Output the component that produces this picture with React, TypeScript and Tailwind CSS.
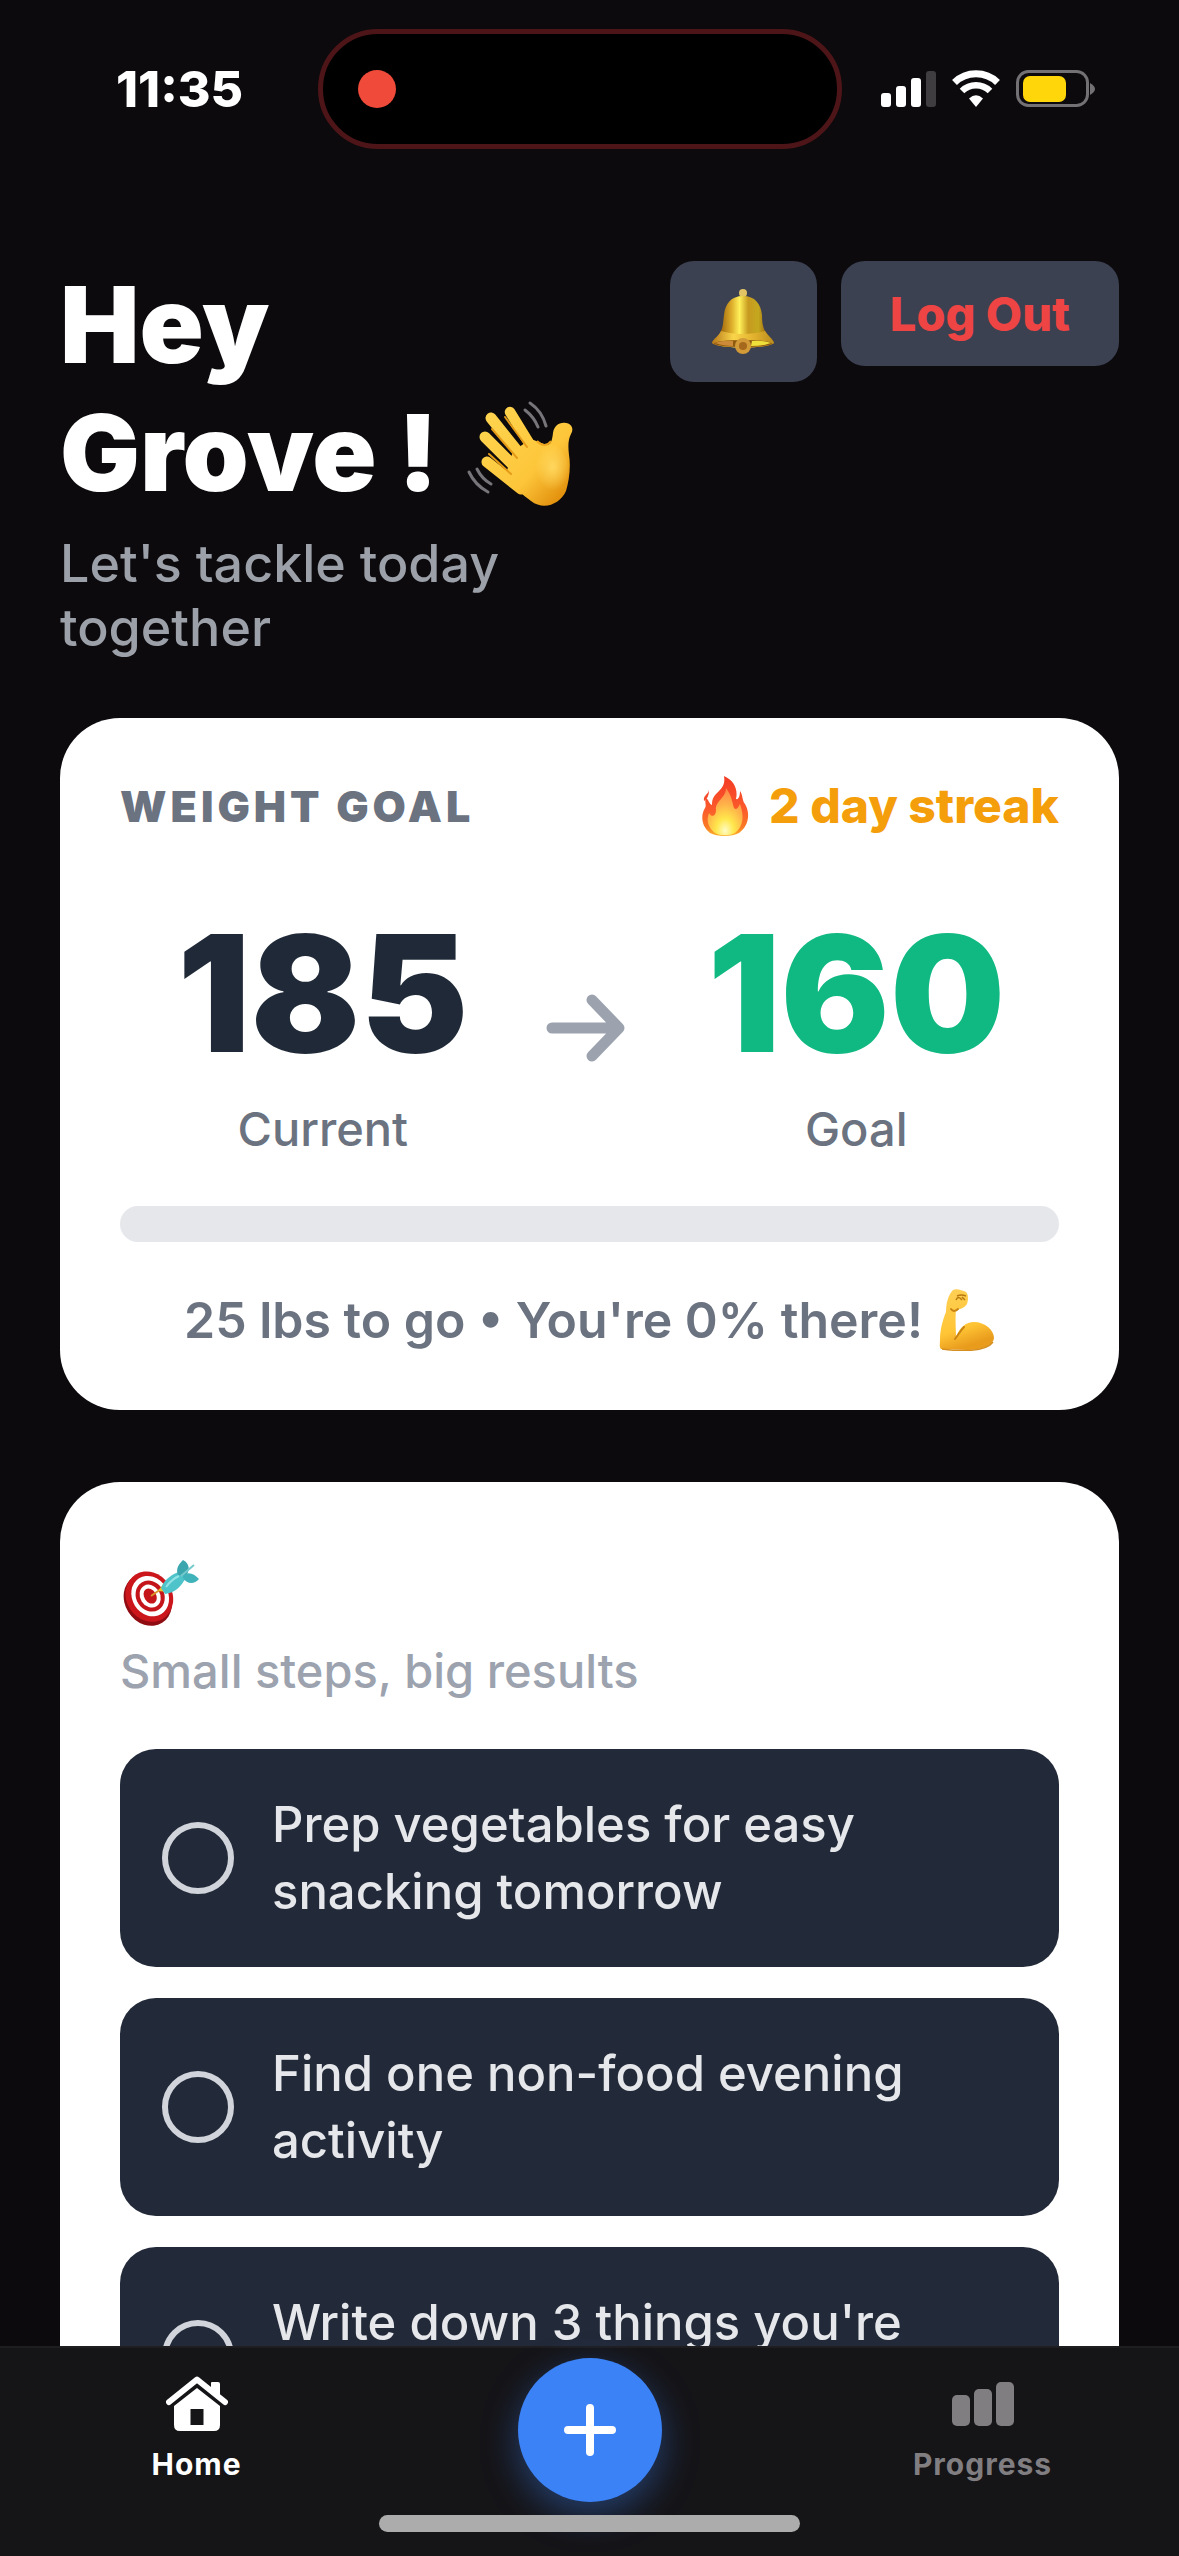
import React, { useState } from "react";

function WaveEmoji() {
  return (
    <svg viewBox="0 0 106 106" className="ml-2 inline-block h-[106px] w-[106px] align-[-16px]" role="img" aria-label="waving hand">
      <defs>
        <linearGradient id="wave-skin" x1="20" y1="20" x2="96" y2="92" gradientUnits="userSpaceOnUse">
          <stop offset="0" stopColor="#ffd34d" />
          <stop offset="0.65" stopColor="#fdc63a" />
          <stop offset="1" stopColor="#e4930f" />
        </linearGradient>
        <radialGradient id="wave-palm" cx="0.55" cy="0.45" r="0.5">
          <stop offset="0" stopColor="#ffd75e" />
          <stop offset="1" stopColor="#ffd75e" stopOpacity="0" />
        </radialGradient>
      </defs>
      <g stroke="url(#wave-skin)" strokeLinecap="round" fill="none">
        <path d="M43 11 L70 55" strokeWidth="10.5" />
        <path d="M24 17 L60 62" strokeWidth="11" />
        <path d="M18 36 L56 74" strokeWidth="11" />
        <path d="M20 61 L54 88" strokeWidth="11" />
      </g>
      <path
        d="M46 50 L64 38 L77 43 C84 46 85 40 86 32 C87 25 92 21 99 22 C105 23 107 28 104 33 C101 39 101 45 102 54 C104 66 102 80 99 90 C93 103 77 110 64 100 C54 93 47 86 38 76 Z"
        fill="url(#wave-skin)"
      />
      <ellipse cx="84" cy="68" rx="17" ry="24" fill="url(#wave-palm)" />
      <g stroke="#e59b18" strokeWidth="2" strokeLinecap="round" fill="none">
        <path d="M38 16 L60 46" />
        <path d="M25 28 L50 57" />
        <path d="M22 53 L44 73" />
      </g>
      <path d="M70 40 Q78 48 84 40" stroke="#eda51f" strokeWidth="2" fill="none" />
      <g stroke="#77757a" strokeWidth="3" strokeLinecap="round" fill="none">
        <path d="M63 2 Q75 10 79 25" />
        <path d="M58 9 Q67 16 71 26" />
        <path d="M2 71 Q8 84 21 91" />
        <path d="M10 68 Q15 78 24 83" />
      </g>
    </svg>
  );
}

function BellEmoji() {
  return (
    <svg viewBox="0 0 64 65" className="h-[65px] w-[64px]" aria-hidden="true">
      <defs>
        <linearGradient id="bell-body" x1="10" y1="0" x2="54" y2="0" gradientUnits="userSpaceOnUse">
          <stop offset="0" stopColor="#a36a0c" />
          <stop offset="0.25" stopColor="#dfb02c" />
          <stop offset="0.42" stopColor="#fff05a" />
          <stop offset="0.62" stopColor="#c79a20" />
          <stop offset="0.85" stopColor="#c4a81e" />
          <stop offset="1" stopColor="#a87413" />
        </linearGradient>
        <linearGradient id="bell-lip" x1="0" y1="0" x2="64" y2="0" gradientUnits="userSpaceOnUse">
          <stop offset="0" stopColor="#b47418" />
          <stop offset="0.35" stopColor="#f9d54a" />
          <stop offset="0.7" stopColor="#dfae2c" />
          <stop offset="1" stopColor="#b68a1c" />
        </linearGradient>
      </defs>
      <circle cx="32" cy="4" r="4" fill="#e2c465" />
      <path
        d="M32 7 C44 7 50 15 51 26 C51 34 52 38 54 42 C57 47 62 50 63 54 C57 60 7 60 1 54 C2 50 8 47 10 42 C12 38 12 34 13 26 C14 15 20 7 32 7Z"
        fill="url(#bell-body)"
      />
      <path d="M10 42 C22 46 42 46 54 42 C57 47 62 50 63 54 C57 60 7 60 1 54 C2 50 8 47 10 42Z" fill="url(#bell-lip)" />
      <ellipse cx="32" cy="54.500" rx="29" ry="3.500" fill="#8d5a10" />
      <path d="M40 57 Q52 57 60 54 Q52 51 41 52Z" fill="#eedf3a" />
      <path d="M22 57 Q12 57 4 54 Q12 51 22 52Z" fill="#cd8a38" />
      <circle cx="32" cy="57" r="8" fill="#d39a38" />
      <circle cx="32" cy="57" r="4" fill="#a5681c" />
    </svg>
  );
}

function FireEmoji() {
  return (
    <svg viewBox="0 0 48 60" className="h-[60px] w-[48px]" role="img" aria-label="fire">
      <defs>
        <linearGradient id="fire-outer" x1="0" y1="0" x2="0" y2="1">
          <stop offset="0" stopColor="#f33a24" />
          <stop offset="0.55" stopColor="#fb5a2c" />
          <stop offset="0.85" stopColor="#f97a25" />
          <stop offset="1" stopColor="#fbb42c" />
        </linearGradient>
        <radialGradient id="fire-inner" cx="0.5" cy="0.9" r="0.85">
          <stop offset="0" stopColor="#fffbc4" />
          <stop offset="0.3" stopColor="#ffe74c" />
          <stop offset="0.65" stopColor="#ffb34a" />
          <stop offset="1" stopColor="#ff8a48" />
        </radialGradient>
      </defs>
      <path
        d="M23 0 C34 5 37 14 35 23 C38 24 39 19 39 15 C42 19 41 25 44 28 C50 38 47 51 38 57 C31 61 16 61 9 57 C1 51 -1 40 4 32 C6 29 3 26 5 22 C8 24 8 28 11 29 C11 22 13 20 18 15 C23 10 24 6 23 0Z"
        fill="url(#fire-outer)"
      />
      <path d="M8 14 C7 19 2 19 3 25 C6 23 8 20 8 14Z" fill="#f4492a" />
      <path d="M25 12 C31 20 31 26 33 32 C36 35 37 31 39 28 C43 39 43 50 34 57 C29 60 19 60 14 57 C7 52 5 44 8 37 C11 42 15 40 15 34 C14 25 25 22 25 12Z" fill="url(#fire-inner)" />
    </svg>
  );
}

function MuscleEmoji() {
  return (
    <svg viewBox="0 0 56 62" className="h-[62px] w-[56px]" role="img" aria-label="flexed arm">
      <defs>
        <linearGradient id="arm-skin" x1="0" y1="0" x2="0.3" y2="1">
          <stop offset="0" stopColor="#ffd158" />
          <stop offset="0.7" stopColor="#ffc536" />
          <stop offset="1" stopColor="#e99b1c" />
        </linearGradient>
      </defs>
      <path
        d="M14 1 C17 -1 23 1 27 3 C30 6 29 12 28 15 C26 18 23 20 17 21 C16 30 17 40 17 48 C21 38 27 33 35 33 C46 33 55 41 55 49 C54 57 42 61 28 61 L2 60 C0 58 1 54 1 50 C1 41 4 30 7 23 C7 15 9 6 14 1Z"
        fill="url(#arm-skin)"
      />
      <path d="M16 50 C20 45 21 42 25 38 M12 20 C14 23 17 22 19 20" stroke="#c98312" strokeWidth="2" fill="none" strokeLinecap="round" />
      <path d="M18 7 Q22 5 27 7 M17 11 Q19 6 23 11 M23 8 L26 11" stroke="#b8790f" strokeWidth="1.500" fill="none" />
      <path d="M3 60 C17 62 46 64 54 53" stroke="#d48f20" strokeWidth="1.500" fill="none" />
    </svg>
  );
}

function TargetEmoji() {
  return (
    <svg viewBox="-3 0 79 66" className="h-[66px] w-[79px]" role="img" aria-label="target">
      <g transform="rotate(-32 26 38)">
        <ellipse cx="24" cy="39" rx="23" ry="27" fill="#8f0d12" />
        <ellipse cx="27" cy="37" rx="23" ry="26" fill="#cb161c" />
        <ellipse cx="28" cy="37" rx="18" ry="21" fill="#fff" />
        <ellipse cx="28" cy="37" rx="14" ry="16" fill="#c4151b" />
        <ellipse cx="28" cy="37" rx="10" ry="12" fill="#fff" />
        <ellipse cx="28" cy="37" rx="6" ry="8" fill="#c4151b" />
      </g>
      <path d="M28 36 L38 29" stroke="#d9962a" strokeWidth="2" />
      <path d="M35 31 L41 23 L45 32Z" fill="#eac32b" />
      <path d="M38 28 C42 18 50 14 58 11 L63 17 C59 26 52 33 42 34Z" fill="#4fc3ca" />
      <path d="M55 15 C52 8 57 3 60 0 C67 4 67 10 63 16Z" fill="#3ba6ae" />
      <path d="M60 16 C64 11 71 13 76 19 C71 25 64 24 60 18Z" fill="#3fb2ba" />
      <path d="M58 16 L71 5" stroke="#75c9cd" strokeWidth="2" />
      <path d="M43 27 Q49 19 56 16" stroke="#91e3e4" strokeWidth="2" fill="none" />
    </svg>
  );
}

function StatusIcons() {
  return (
    <svg viewBox="0 0 216 40" className="h-10 w-[216px]" role="img" aria-label="signal, wifi and battery">
      <g fill="#fff">
        <rect x="0" y="24" width="10" height="14" rx="3" />
        <rect x="15" y="17" width="10" height="21" rx="3" />
        <rect x="30" y="9" width="10" height="29" rx="3" />
        <rect x="45" y="2" width="10" height="36" rx="3" fill="#3f3d40" />
      </g>
      <g fill="none" stroke="#fff">
        <path d="M73.500 13.500 A31 31 0 0 1 116.500 13.500" strokeWidth="7" />
        <path d="M81 22 A20 20 0 0 1 109 22" strokeWidth="6.500" />
      </g>
      <path d="M95 38 L88 29.500 Q95 23 102 29.500Z" fill="#fff" />
      <rect x="136.500" y="2.500" width="70" height="34" rx="11" fill="none" stroke="#737174" strokeWidth="3" />
      <rect x="142" y="7" width="43" height="26" rx="7" fill="#ffd60a" />
      <path d="M209 14 Q214 17 214 20 Q214 23 209 26Z" fill="#737174" />
    </svg>
  );
}

function HomeIcon() {
  return (
    <svg viewBox="0 0 62 56" className="h-14 w-[62px]" aria-hidden="true">
      <path d="M45 7 Q45 6 46 6 H52 Q54 6 54 8 V21 L45 13Z" fill="#fff" />
      <path d="M3 26 L31 3.500 L59 26" fill="none" stroke="#fff" strokeWidth="6" strokeLinecap="round" strokeLinejoin="round" />
      <path fillRule="evenodd" d="M31 12 L54 30 V49 Q54 55 48 55 H14 Q8 55 8 49 V30Z M24.500 33 V49 H37.500 V33Z" fill="#fff" />
    </svg>
  );
}

const TASKS = [
  "Prep vegetables for easy snacking tomorrow",
  "Find one non-food evening activity",
  "Write down 3 things you're",
];

function Task({ id, text }: { id: string; text: string }) {
  const [done, setDone] = useState(false);
  return (
    <li className="flex min-h-[218px] items-center gap-[38px] rounded-[36px] bg-[#222938] px-[42px] py-[42px]">
      <input
        id={id}
        type="checkbox"
        checked={done}
        onChange={() => setDone(!done)}
        className="h-[72px] w-[72px] shrink-0 appearance-none rounded-full border-[6px] border-[#d1d5db] checked:bg-[#10b981]"
      />
      <label htmlFor={id} className="flex-1 self-start text-[49px] leading-[67px] font-medium text-[#e5e7eb]">
        {text}
      </label>
    </li>
  );
}

function Stat({ value, label, tone }: { value: string; label: string; tone: string }) {
  return (
    <div className="flex flex-col items-center gap-[15px]">
      <span className={`text-[162px] leading-[188px] font-black ${tone}`}>{value}</span>
      <span className="text-[47px] leading-[54px] font-medium text-[#6b7280]">{label}</span>
    </div>
  );
}

export default function App() {
  return (
    <div className="flex h-screen flex-col overflow-hidden bg-[#0c0a0d] font-['Inter','Liberation_Sans',sans-serif]">
      <div className="flex shrink-0 items-center pt-[29px]">
        <div className="w-[27%] pl-[116px] text-[50px] leading-[58px] font-extrabold text-white">11:35</div>
        <div className="flex h-[120px] w-[524px] items-center rounded-full border-[5px] border-[#4e1518] bg-black pl-[35px]">
          <span className="h-[38px] w-[38px] rounded-full bg-[#ef4a3a]" />
        </div>
        <div className="flex-1 pl-[39px]">
          <StatusIcons />
        </div>
      </div>

      <main className="min-h-0 flex-1 overflow-hidden px-[60px] pt-28">
        <header className="flex items-start gap-6">
          <div className="flex-1">
            <h1 className="text-[106px] leading-[128px] font-black text-white">
              Hey{" "}
              <span className="whitespace-nowrap">
                Grove ! <WaveEmoji />
              </span>
            </h1>
            <p className="mt-[15px] text-[52px] leading-[64px] font-medium text-[#9ca0a8]">Let's tackle today together</p>
          </div>
          <button aria-label="Notifications" className="flex h-[121px] w-[147px] items-center justify-center rounded-3xl bg-[#3c4152]">
            <BellEmoji />
          </button>
          <button className="h-[105px] rounded-3xl bg-[#3c4152] px-[49px] text-[47px] leading-[56px] font-extrabold text-[#ef4444]">
            Log Out
          </button>
        </header>

        <section className="mt-[58px] rounded-[60px] bg-white p-[60px]">
          <div className="flex h-14 items-center justify-between">
            <h2 className="text-[43px] leading-[58px] font-black tracking-[4px] text-[#6b7280]">WEIGHT GOAL</h2>
            <p className="flex items-center gap-5 text-[48px] leading-[58px] font-extrabold text-[#f59e0b]">
              <FireEmoji />2 day streak
            </p>
          </div>
          <div className="mt-[65px] grid grid-cols-[1fr_auto_1fr] items-center">
            <Stat value="185" label="Current" tone="text-[#1f2937]" />
            <svg viewBox="0 0 80 68" className="mr-7 ml-5 h-[68px] w-20" aria-hidden="true">
              <path d="M6 34 H72 M46 6 L73 34 L46 62" fill="none" stroke="#9ca3af" strokeWidth="11" strokeLinecap="round" strokeLinejoin="round" />
            </svg>
            <Stat value="160" label="Goal" tone="text-[#10b981]" />
          </div>
          <div role="progressbar" aria-label="Weight goal progress" aria-valuenow={0} className="mt-[50px] h-9 rounded-full bg-[#e5e7eb]" />
          <p className="mt-12 flex h-[60px] items-center justify-center gap-4 text-[50px] leading-[60px] font-semibold text-[#6b7280]">
            25 lbs to go • You're 0% there!
            <MuscleEmoji />
          </p>
        </section>

        <section className="mt-[72px] rounded-[60px] bg-white p-[60px]">
          <h2 className="flex h-[102px] items-center">
            <TargetEmoji />
          </h2>
          <p className="text-[47px] leading-[54px] font-medium text-[#9ca3af]">Small steps, big results</p>
          <ul className="mt-[51px] flex flex-col gap-[31px]">
            {TASKS.map((text, i) => (
              <Task key={text} id={`task-${i}`} text={text} />
            ))}
          </ul>
        </section>
      </main>

      <div className="shrink-0 border-t-2 border-[#1e1d20] bg-[#151417] pb-6">
        <nav className="grid h-[167px] grid-cols-3 text-[30px] leading-9 font-bold tracking-[1px]">
          <a href="#home" className="flex flex-col items-center gap-[14px] pt-7 text-white">
            <HomeIcon />
            Home
          </a>
          <div className="flex justify-center pt-[10px]">
            <button aria-label="Add" className="flex h-36 w-36 items-center justify-center rounded-full bg-[#3b82f6] shadow-[0_12px_36px_rgba(59,130,246,0.4)]">
              <svg viewBox="0 0 52 52" className="h-[52px] w-[52px]" aria-hidden="true">
                <path d="M26 4 V48 M4 26 H48" stroke="#fff" strokeWidth="8" strokeLinecap="round" />
              </svg>
            </button>
          </div>
          <a href="#progress" className="flex flex-col items-center gap-[14px] pt-7 text-[#807e81]">
            <svg viewBox="0 0 62 56" className="h-14 w-[62px]" fill="currentColor" aria-hidden="true">
              <rect x="0" y="19" width="18" height="31" rx="5" />
              <rect x="22" y="13" width="18" height="37" rx="5" />
              <rect x="44" y="6" width="18" height="44" rx="5" />
            </svg>
            Progress
          </a>
        </nav>
        <div className="relative mx-auto h-[17px] w-[421px] rounded-full bg-[#acacac]" />
      </div>
    </div>
  );
}
